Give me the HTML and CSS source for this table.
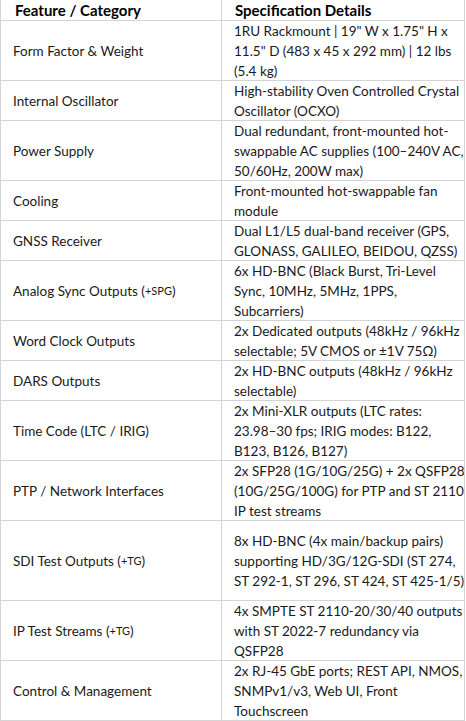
FILE: index.html
```html
<!DOCTYPE html>
<html lang="en">
<head>
<meta charset="utf-8">
<title>Specifications</title>
<link rel="stylesheet" href="styles.css">
</head>
<body>
<div class="sheet">
  <div class="row head">
    <div class="cell key">Feature / Category</div>
    <div class="cell val">Specification Details</div>
  </div>
  <div class="row h60">
    <div class="cell key">Form Factor &amp; Weight</div>
    <div class="cell val">1RU Rackmount | 19&quot; W x 1.75&quot; H x<br>11.5&quot; D (483 x 45 x 292 mm) | 12 lbs<br>(5.4 kg)</div>
  </div>
  <div class="row h40">
    <div class="cell key">Internal Oscillator</div>
    <div class="cell val">High-stability Oven Controlled Crystal<br>Oscillator (OCXO)</div>
  </div>
  <div class="row h60">
    <div class="cell key">Power Supply</div>
    <div class="cell val">Dual redundant, front-mounted hot-<br>swappable AC supplies (100–240V AC,<br>50/60Hz, 200W max)</div>
  </div>
  <div class="row h40">
    <div class="cell key">Cooling</div>
    <div class="cell val">Front-mounted hot-swappable fan<br>module</div>
  </div>
  <div class="row h40">
    <div class="cell key">GNSS Receiver</div>
    <div class="cell val">Dual L1/L5 dual-band receiver (GPS,<br>GLONASS, GALILEO, BEIDOU, QZSS)</div>
  </div>
  <div class="row h60">
    <div class="cell key">Analog Sync Outputs (<span class="tag">+SPG</span>)</div>
    <div class="cell val">6x HD-BNC (Black Burst, Tri-Level<br>Sync, 10MHz, 5MHz, 1PPS,<br>Subcarriers)</div>
  </div>
  <div class="row h40">
    <div class="cell key">Word Clock Outputs</div>
    <div class="cell val">2x Dedicated outputs (48kHz / 96kHz<br>selectable; 5V CMOS or ±1V 75Ω)</div>
  </div>
  <div class="row h40">
    <div class="cell key">DARS Outputs</div>
    <div class="cell val">2x HD-BNC outputs (48kHz / 96kHz<br>selectable)</div>
  </div>
  <div class="row h60">
    <div class="cell key">Time Code (LTC / IRIG)</div>
    <div class="cell val">2x Mini-XLR outputs (LTC rates:<br>23.98–30 fps; IRIG modes: B122,<br>B123, B126, B127)</div>
  </div>
  <div class="row h60">
    <div class="cell key">PTP / Network Interfaces</div>
    <div class="cell val">2x SFP28 (1G/10G/25G) + 2x QSFP28<br>(10G/25G/100G) for PTP and ST 2110<br>IP test streams</div>
  </div>
  <div class="row h80">
    <div class="cell key">SDI Test Outputs (<span class="tag">+TG</span>)</div>
    <div class="cell val">8x HD-BNC (4x main/backup pairs)<br>supporting HD/3G/12G-SDI (ST 274,<br>ST 292-1, ST 296, ST 424, ST 425-1/5)</div>
  </div>
  <div class="row h60">
    <div class="cell key">IP Test Streams (<span class="tag">+TG</span>)</div>
    <div class="cell val">4x SMPTE ST 2110-20/30/40 outputs<br>with ST 2022-7 redundancy via<br>QSFP28</div>
  </div>
  <div class="row h60">
    <div class="cell key">Control &amp; Management</div>
    <div class="cell val">2x RJ-45 GbE ports; REST API, NMOS,<br>SNMPv1/v3, Web UI, Front<br>Touchscreen</div>
  </div>
</div>
</body>
</html>
```

FILE: styles.css
```css
html, body {
  margin: 0;
  padding: 0;
  background: #ffffff;
}

.sheet {
  width: 465px;
  border-left: 1px solid #d4d4d4;
  box-sizing: border-box;
  font-family: Lato, "Open Sans", sans-serif;
  font-size: 13.5px;
  line-height: 20px;
  color: #1a1a1a;
}

.row {
  display: grid;
  grid-template-columns: 221px 243px;
  box-sizing: border-box;
}

.cell {
  display: flex;
  align-items: center;
  box-sizing: border-box;
  border-right: 1px solid #d4d4d4;
  border-bottom: 1px solid #d4d4d4;
  white-space: nowrap;
  overflow: hidden;
}

.key {
  padding-left: 12px;
}

.val {
  padding-left: 12px;
}

.head {
  height: 21px;
}

.head .cell {
  font-size: 15px;
  font-weight: 700;
  align-items: flex-end;
  padding-left: 14px;
  color: #000;
}

.head .val {
  padding-left: 13px;
}

.h40 { height: 40px; }
.h60 { height: 60px; }
.h80 { height: 80px; }

.tag {
  font-size: 11px;
}
```
